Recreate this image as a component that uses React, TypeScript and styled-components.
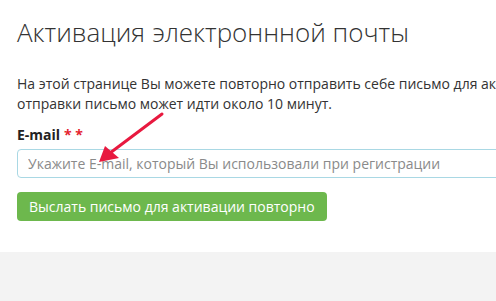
import React from 'react';
import styled, { createGlobalStyle } from 'styled-components';

const Global = createGlobalStyle`
  html, body {
    margin: 0;
    padding: 0;
    background: #ffffff;
    overflow: hidden;
  }
  body {
    font-family: 'Open Sans', 'Noto Sans', sans-serif;
    color: #333333;
  }
`;

const Page = styled.div`
  width: 496px;
  height: 301px;
  overflow: hidden;
  display: flex;
  flex-direction: column;
`;

const Content = styled.main`
  position: relative;
  width: 760px;
  padding: 14px 0 0 17px;
  height: 252px;
  box-sizing: border-box;
`;

const Title = styled.h1`
  margin: 0 0 24px;
  font-weight: 300;
  font-size: 26px;
  line-height: 36px;
  color: #333333;
`;

const Intro = styled.p`
  margin: 0 0 11px;
  font-size: 14px;
  line-height: 20px;
  color: #333333;
`;

const Label = styled.label`
  display: block;
  font-weight: 700;
  font-size: 14px;
  line-height: 20px;
  margin-bottom: 4px;
  color: #222222;
`;

const Required = styled.span`
  color: #e4242f;
  margin-left: 4px;
`;

const Input = styled.input`
  display: block;
  box-sizing: border-box;
  width: 600px;
  height: 29px;
  padding: 0 10px;
  border: 1px solid #a9d8e4;
  border-radius: 4px;
  font-family: inherit;
  font-size: 14px;
  color: #333333;
  outline: none;
  &::placeholder {
    color: #8a8a8a;
  }
`;

const Button = styled.button`
  margin-top: 14px;
  height: 29px;
  padding: 0 12px;
  border: none;
  border-radius: 4px;
  background: #6db84d;
  color: #ffffff;
  font-family: inherit;
  font-size: 14px;
  cursor: pointer;
`;

const Footer = styled.footer`
  flex: 1;
  background: #f3f3f3;
`;

const Arrow = styled.svg`
  position: absolute;
  left: 0;
  top: 0;
  pointer-events: none;
`;

export default function App() {
  return (
    <>
      <Global />
      <Page>
        <Content>
          <Title>Активация электроннной почты</Title>
          <Intro>
            На этой странице Вы можете повторно отправить себе письмо для активации. Время
            <br />
            отправки письмо может идти около 10 минут.
          </Intro>
          <Label htmlFor="email">
            E-mail<Required>* *</Required>
          </Label>
          <Input id="email" placeholder="Укажите E-mail, который Вы использовали при регистрации" />
          <Button>Выслать письмо для активации повторно</Button>
          <Arrow width="200" height="200" viewBox="0 0 200 200">
            <line x1="162" y1="114" x2="110" y2="153" stroke="#e8193f" strokeWidth="3" strokeLinecap="round" />
            <polygon points="99,162 105,146 119,158" fill="#e8193f" />
          </Arrow>
        </Content>
        <Footer />
      </Page>
    </>
  );
}
